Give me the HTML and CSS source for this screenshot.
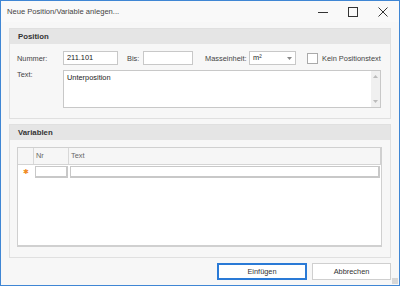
FILE: index.html
```html
<!DOCTYPE html>
<html lang="de">
<head>
  <meta charset="UTF-8">
  <title>Neue Position/Variable anlegen...</title>
  <link rel="stylesheet" href="styles.css">
</head>
<body>
  <div class="window">
    <div class="titlebar">
      <span class="title">Neue Position/Variable anlegen...</span>
      <div class="controls">
        <svg width="10" height="10" viewBox="0 0 10 10"><path d="M0 5.5h10" stroke="#333" stroke-width="1"/></svg>
        <svg width="10" height="10" viewBox="0 0 10 10"><rect x="0.5" y="0.5" width="9" height="9" fill="none" stroke="#333"/></svg>
        <svg width="10" height="10" viewBox="0 0 10 10"><path d="M0.5 0.5l9 9M9.5 0.5l-9 9" stroke="#333" stroke-width="1"/></svg>
      </div>
    </div>

    <div class="content">
      <section class="group group-position">
        <div class="group-head">Position</div>
        <div class="group-body">
          <div class="row">
            <label class="lbl lbl-first">Nummer:</label>
            <div class="input w-nummer">211.101</div>
            <label class="lbl lbl-bis">Bis:</label>
            <div class="input w-bis"></div>
            <label class="lbl lbl-masse">Masseinheit:</label>
            <div class="input combo">
              <span>m²</span>
              <svg width="5" height="3" viewBox="0 0 5 3"><path d="M0 0h5L2.5 3z" fill="#888"/></svg>
            </div>
            <span class="check"></span>
            <label class="lbl">Kein Positionstext</label>
          </div>
          <div class="row row-text">
            <label class="lbl lbl-first">Text:</label>
            <div class="input memo">
              <span class="memo-text">Unterposition</span>
              <div class="scroll">
                <svg width="5" height="3" viewBox="0 0 5 3"><path d="M0 3h5L2.5 0z" fill="#bbb"/></svg>
                <svg width="5" height="3" viewBox="0 0 5 3"><path d="M0 0h5L2.5 3z" fill="#bbb"/></svg>
              </div>
            </div>
          </div>
        </div>
      </section>

      <section class="group group-var">
        <div class="group-head">Variablen</div>
        <div class="group-body">
          <div class="grid">
            <div class="grid-head">
              <div class="cell ind"></div>
              <div class="cell col-nr">Nr</div>
              <div class="cell col-text">Text</div>
            </div>
            <div class="grid-new">
              <div class="cell ind"><span class="star">✱</span></div>
              <div class="cell col-nr"><div class="edit"></div></div>
              <div class="cell col-text"><div class="edit"></div></div>
            </div>
          </div>
        </div>
      </section>

      <div class="buttons">
        <button class="btn btn-default">Einfügen</button>
        <button class="btn">Abbrechen</button>
      </div>
    </div>
    <div class="grip"></div>
  </div>
</body>
</html>
```

FILE: styles.css
```css
body {
  margin: 0;
  font-family: "Liberation Sans", Arial, sans-serif;
  font-size: 7.4px;
  color: #333;
}
.window {
  position: relative;
  width: 400px;
  height: 286px;
  box-sizing: border-box;
  border: 1px solid #3f86d4;
  background: #f7f7f7;
  display: flex;
  flex-direction: column;
}
.titlebar {
  height: 21px;
  display: flex;
  align-items: center;
  justify-content: space-between;
  padding-left: 6px;
  background: #f9f9f9;
}
.title {
  color: #444;
  font-size: 7.6px;
}
.controls {
  display: flex;
  gap: 20px;
  padding-right: 11px;
  padding-top: 1px;
}
.content {
  flex: 1;
  padding: 6px 8px 0 8px;
  display: flex;
  flex-direction: column;
}
.group {
  border: 1px solid #e0e0e0;
  background: #f7f7f7;
}
.group-head {
  height: 15px;
  line-height: 15px;
  padding-left: 8px;
  background: #e5e5e5;
  font-weight: bold;
  font-size: 7.8px;
  color: #333;
}
.group-position .group-body {
  padding: 7px 9px 10px 7px;
}
.row {
  display: flex;
  align-items: center;
  height: 14px;
}
.row-text {
  align-items: flex-start;
  height: auto;
  margin-top: 5px;
}
.lbl {
  color: #444;
  flex-shrink: 0;
  white-space: nowrap;
}
.lbl-first {
  width: 46px;
}
.lbl-bis {
  margin-left: 9px;
  width: 16px;
}
.lbl-masse {
  margin-left: 12px;
  width: 44px;
}
.input {
  box-sizing: border-box;
  flex-shrink: 0;
  height: 14px;
  background: #fff;
  border: 1px solid #c8c8c8;
  padding: 0 3px;
  line-height: 12px;
  color: #222;
}
.w-nummer { width: 55px; }
.w-bis { width: 50px; }
.combo {
  width: 47px;
  display: flex;
  justify-content: space-between;
  align-items: center;
}
.check {
  flex-shrink: 0;
  width: 11px;
  height: 11px;
  box-sizing: border-box;
  margin-left: 11px;
  margin-right: 4px;
  border: 1px solid #aaa;
  background: #fff;
}
.memo {
  flex: 1;
  height: 38px;
  display: flex;
  justify-content: space-between;
  padding-right: 0;
}
.memo-text {
  padding-top: 1px;
}
.scroll {
  width: 9px;
  background: #f0f0f0;
  display: flex;
  flex-direction: column;
  justify-content: space-between;
  align-items: center;
  padding: 4px 0;
}
.group-var {
  margin-top: 5px;
  flex: 0 0 auto;
}
.group-var .group-body {
  padding: 7px 8px 10px 7px;
}
.grid {
  height: 100px;
  box-sizing: border-box;
  border: 1px solid #d0d0d0;
  border-bottom-width: 2px;
  background: #fff;
}
.grid-head, .grid-new {
  display: flex;
}
.grid-head {
  height: 16px;
  background: #f6f6f6;
  border-bottom: 1px solid #d4d4d4;
}
.grid-head .cell {
  line-height: 16px;
  color: #666;
  border-right: 1px solid #d8d8d8;
  padding-left: 2px;
}
.cell {
  box-sizing: border-box;
}
.ind { width: 16px; }
.col-nr { width: 35px; }
.col-text { flex: 1; }
.grid-head .col-text { border-right: 1px solid #d0d0d0; }
.grid-new {
  height: 14px;
}
.grid-new .cell {
  padding: 1px 1px 0 1px;
}
.grid-new .ind {
  padding: 0;
  display: flex;
  align-items: center;
  justify-content: center;
}
.star {
  color: #f08a24;
  font-size: 7px;
}
.edit {
  height: 12px;
  box-sizing: border-box;
  border: 1px solid #c8c8c8;
  border-right-width: 2px;
  border-bottom-width: 2px;
  background: #fff;
}
.buttons {
  display: flex;
  justify-content: flex-end;
  gap: 5px;
  margin-top: 5px;
}
.btn {
  font-family: inherit;
  font-size: 7.4px;
  color: #333;
  width: 79px;
  height: 17px;
  background: #fff;
  border: 1px solid #cfcfcf;
  padding: 0;
}
.btn-default {
  width: 90px;
  border: 1px solid #2a7ad6;
  box-shadow: inset 0 0 0 1px #2a7ad6;
}
.grip {
  position: absolute;
  right: 1px;
  bottom: 1px;
  width: 6px;
  height: 6px;
  background: radial-gradient(circle, #b0b0b0 0.6px, transparent 0.8px) 0 0 / 2px 2px;
}
```
